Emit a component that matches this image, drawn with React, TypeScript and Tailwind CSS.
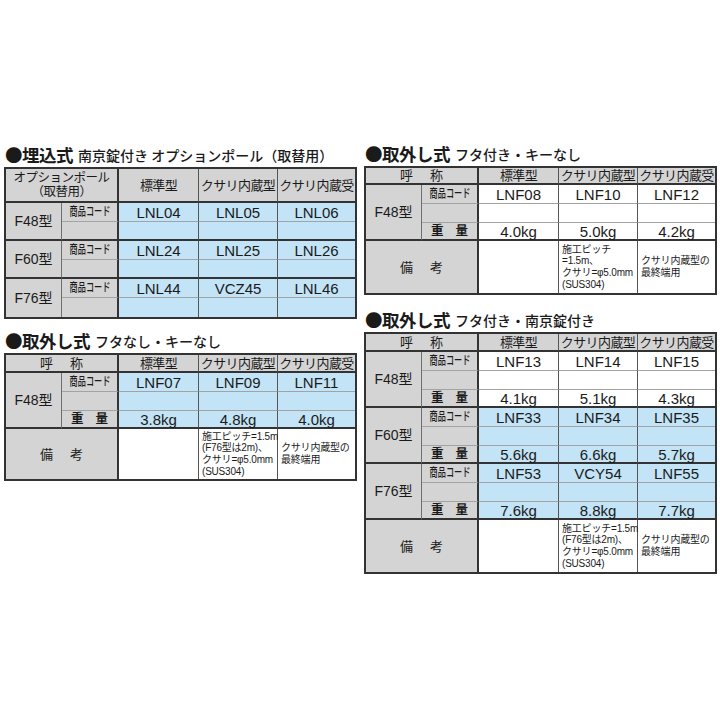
import type { ReactNode } from 'react';

type RowKind = 'code' | 'blank' | 'weight';
type Group = { name: string; blue: boolean; rows: { kind: RowKind; values: string[] }[] };

const GRAY = 'bg-[#d4d4d4]';
const BLUE = 'bg-[#c2e4f6]';
const WHITE = 'bg-white';

const B_DARK = 'border-b-2 border-b-[#333]';
const B_MINOR = 'border-b border-b-[#a3a3a3]';
const R_COL1 = 'border-r border-r-[#707070]';
const R_COL2 = 'border-r-2 border-r-[#333]';
const R_MID = 'border-r border-r-[#555]';

const CJK = "font-['Noto_Sans_CJK_JP',sans-serif]";

const RowLabel = ({ kind }: { kind: RowKind }) => {
  if (kind === 'code')
    return (
      <span className="inline-block scale-x-[0.68] text-[12px] font-medium leading-none whitespace-nowrap">
        商品コード
      </span>
    );
  if (kind === 'weight')
    return (
      <span className="flex w-full justify-between pl-[9px] pr-[9px] text-[12.5px] font-bold leading-none">
        <span>重</span>
        <span>量</span>
      </span>
    );
  return null;
};

const Spread = ({ a, b }: { a: string; b: string }) => (
  <span className="flex gap-[17px] text-[13px] leading-none">
    <span>{a}</span>
    <span>{b}</span>
  </span>
);

const Note = ({ lines }: { lines: string[] }) => (
  <div className="pl-[3px] text-[10px] leading-[11.7px] tracking-[-0.2px]">
    {lines.map((l) => (
      <div key={l} className="whitespace-nowrap">{l}</div>
    ))}
  </div>
);

type TableProps = {
  title: string;
  subtitle: string;
  head: ReactNode;
  rowsClass: string;
  groups: Group[];
  notes?: [string[], string[]];
};

const SpecTable = ({ title, subtitle, head, rowsClass, groups, notes }: TableProps) => {
  const cells: ReactNode[] = [];
  groups.forEach((g, gi) => {
    const lastGroup = gi === groups.length - 1 && !notes;
    const groupBottom = lastGroup ? '' : B_DARK;
    const span = g.rows.length === 3 ? 'row-span-3' : 'row-span-2';
    cells.push(
      <div key={g.name} className={`${span} ${GRAY} ${R_COL1} ${groupBottom} flex items-center justify-center text-[14px]`}>
        {g.name}
      </div>
    );
    g.rows.forEach((r, ri) => {
      const lastRow = ri === g.rows.length - 1;
      const bottom = lastRow ? groupBottom : B_MINOR;
      const bg = g.blue ? BLUE : WHITE;
      cells.push(
        <div key={`${g.name}-l${ri}`} className={`${GRAY} ${R_COL2} ${bottom} flex items-center justify-center`}>
          <RowLabel kind={r.kind} />
        </div>
      );
      r.values.forEach((v, vi) => {
        cells.push(
          <div
            key={`${g.name}-${ri}-${vi}`}
            className={`${bg} ${vi < 2 ? R_MID : ''} ${bottom} flex items-center justify-center text-[15px] leading-none`}
          >
            {v}
          </div>
        );
      });
    });
  });

  return (
    <section>
      <h2 className="flex h-[20px] items-center mb-[2px] pl-[1px] whitespace-nowrap">
        <span className={`${CJK} text-[17.5px] font-bold tracking-[-0.5px]`}>●{title}</span>
        <span className={`${CJK} ml-[5px] text-[14px] font-medium`}>{subtitle}</span>
      </h2>
      <div className={`grid grid-cols-[56px_57px_80px_79px_77px] ${rowsClass} border-2 border-[#333] text-[#1a1a1a]`}>
        <div className={`col-span-2 ${GRAY} ${R_COL2} ${B_DARK} flex items-center justify-center`}>{head}</div>
        {['標準型', 'クサリ内蔵型', 'クサリ内蔵受'].map((h, i) => (
          <div
            key={h}
            className={`${GRAY} ${i < 2 ? R_MID : ''} ${B_DARK} flex items-center justify-center text-[13px] leading-none tracking-[-0.6px] whitespace-nowrap`}
          >
            {h}
          </div>
        ))}
        {cells}
        {notes && (
          <>
            <div className={`col-span-2 ${GRAY} ${R_COL2} flex items-center justify-center`}>
              <Spread a="備" b="考" />
            </div>
            <div className={`${WHITE} ${R_MID}`} />
            <div className={`${WHITE} ${R_MID} flex items-center`}>
              <Note lines={notes[0]} />
            </div>
            <div className={`${WHITE} flex items-center`}>
              <Note lines={notes[1]} />
            </div>
          </>
        )}
      </div>
    </section>
  );
};

const codeRows = (vals: string[]) => [
  { kind: 'code' as RowKind, values: vals },
  { kind: 'blank' as RowKind, values: ['', '', ''] },
];

const fullRows = (vals: string[], kg: string[]) => [
  { kind: 'code' as RowKind, values: vals },
  { kind: 'blank' as RowKind, values: ['', '', ''] },
  { kind: 'weight' as RowKind, values: kg },
];

const endNote = ['クサリ内蔵型の', '最終端用'];
const pitchNote = ['施工ピッチ=1.5m', '(F76型は2m)、', 'クサリ=φ5.0mm', '(SUS304)'];

export default function App() {
  return (
    <div className="h-[720px] w-[720px] overflow-hidden bg-white font-['Liberation_Sans','Noto_Sans_CJK_JP',sans-serif] text-[#1a1a1a]">
      <div className="flex items-start gap-[7px] pl-[4px]">
        <div className="flex w-[353px] flex-col gap-[12px] pt-[145px]">
          <SpecTable
            title="埋込式"
            subtitle="南京錠付き オプションポール（取替用）"
            head={
              <span className="text-center text-[12.5px] leading-[14px] tracking-[-0.5px]">
                オプションポール
                <br />
                （取替用）
              </span>
            }
            rowsClass="grid-rows-[34px_19px_19px_19px_19px_19px_19px]"
            groups={[
              { name: 'F48型', blue: true, rows: codeRows(['LNL04', 'LNL05', 'LNL06']) },
              { name: 'F60型', blue: true, rows: codeRows(['LNL24', 'LNL25', 'LNL26']) },
              { name: 'F76型', blue: true, rows: codeRows(['LNL44', 'VCZ45', 'LNL46']) },
            ]}
          />
          <SpecTable
            title="取外し式"
            subtitle="フタなし・キーなし"
            head={<Spread a="呼" b="称" />}
            rowsClass="grid-rows-[18px_19px_19px_18px_50px]"
            groups={[{ name: 'F48型', blue: true, rows: fullRows(['LNF07', 'LNF09', 'LNF11'], ['3.8kg', '4.8kg', '4.0kg']) }]}
            notes={[pitchNote, endNote]}
          />
        </div>
        <div className="flex w-[353px] flex-col gap-[15px] pt-[144px]">
          <SpecTable
            title="取外し式"
            subtitle="フタ付き・キーなし"
            head={<Spread a="呼" b="称" />}
            rowsClass="grid-rows-[17px_19px_19px_18px_52px]"
            groups={[{ name: 'F48型', blue: false, rows: fullRows(['LNF08', 'LNF10', 'LNF12'], ['4.0kg', '5.0kg', '4.2kg']) }]}
            notes={[['施工ピッチ', '=1.5m、', 'クサリ=φ5.0mm', '(SUS304)'], endNote]}
          />
          <SpecTable
            title="取外し式"
            subtitle="フタ付き・南京錠付き"
            head={<Spread a="呼" b="称" />}
            rowsClass="grid-rows-[18px_19px_19px_18px_19px_19px_18px_19px_19px_18px_52px]"
            groups={[
              { name: 'F48型', blue: false, rows: fullRows(['LNF13', 'LNF14', 'LNF15'], ['4.1kg', '5.1kg', '4.3kg']) },
              { name: 'F60型', blue: true, rows: fullRows(['LNF33', 'LNF34', 'LNF35'], ['5.6kg', '6.6kg', '5.7kg']) },
              { name: 'F76型', blue: true, rows: fullRows(['LNF53', 'VCY54', 'LNF55'], ['7.6kg', '8.8kg', '7.7kg']) },
            ]}
            notes={[pitchNote, endNote]}
          />
        </div>
      </div>
    </div>
  );
}
